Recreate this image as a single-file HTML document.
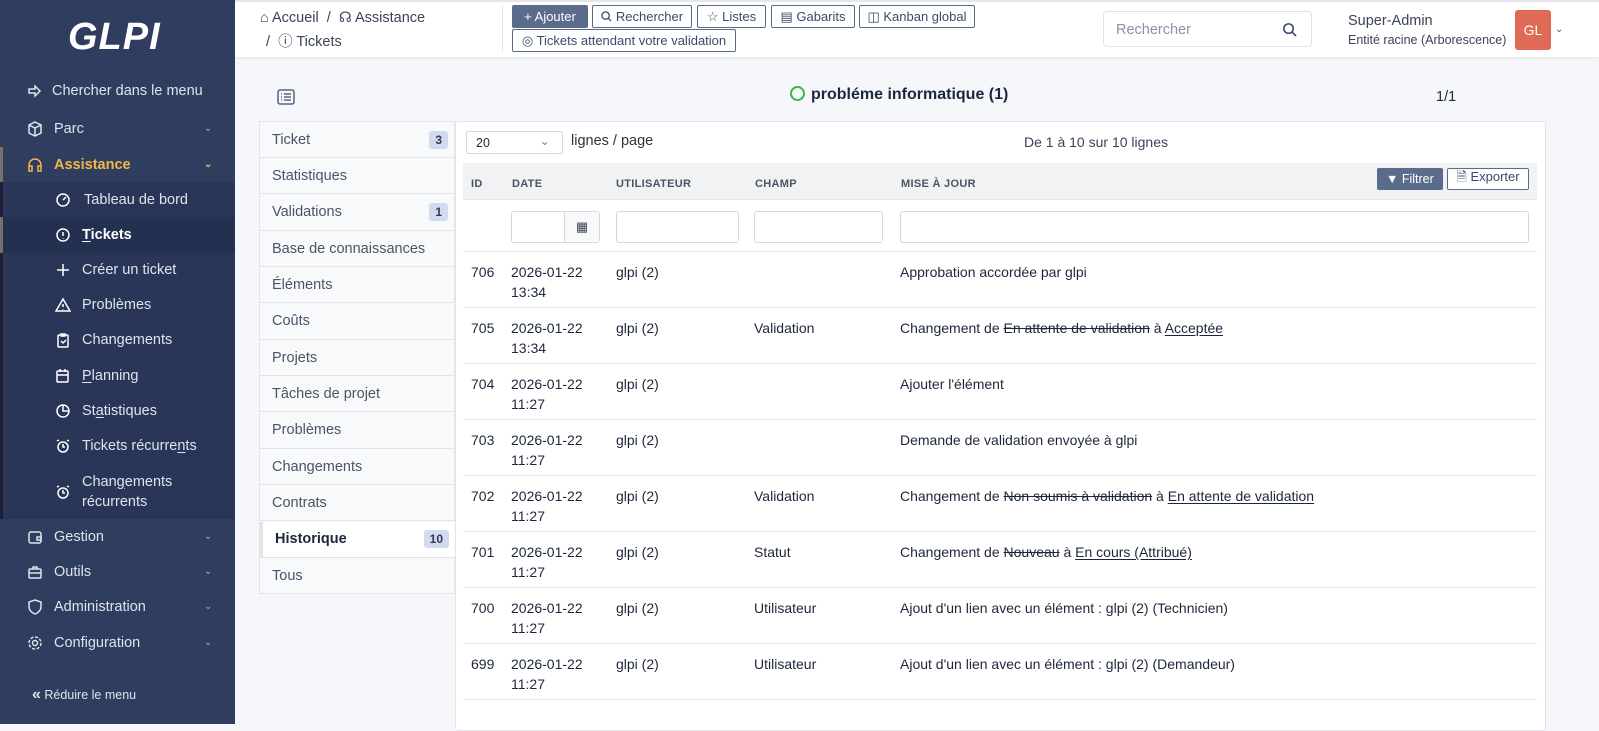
<!DOCTYPE html>
<html><head><meta charset="utf-8"><style>
*{box-sizing:border-box;margin:0;padding:0}
body{width:1599px;height:724px;overflow:hidden;background:#f5f7fb;font-family:"Liberation Sans",sans-serif;font-size:14px;color:#1d273b;position:relative}
.abs{position:absolute}
#sb{left:0;top:0;width:235px;height:724px;background:#2f3d5f;color:#dfe3ec}
.si{position:absolute;left:0;width:235px;height:35px;display:flex;align-items:center;font-size:14.5px}
.si svg{position:absolute;left:27px}
.si .t{position:absolute;left:54px}
.si .c{position:absolute;left:204px;font-size:10px;color:#aab}
.sub .t{left:82px}
.sub svg{left:55px}
#hdr{left:235px;top:0;width:1364px;height:57px;background:#fff;border-top:2px solid #e4e6ea;box-shadow:0 1px 3px rgba(0,0,0,.08)}
.btn{position:absolute;height:23px;border:1px solid #5a6b8c;border-radius:2px;font-size:13px;color:#3a4a6b;display:flex;align-items:center;justify-content:center;background:#fff;white-space:nowrap}
.btn svg{margin-right:4px}
.tab{position:absolute;left:259px;width:196px;height:36.3px;border:1px solid #e2e4e8;border-top:none;background:#f8f9fb;color:#4a5468;font-size:14.5px;padding-left:12px;display:flex;align-items:center}
.badge{position:absolute;right:6px;background:#d3daf0;color:#303a55;font-size:12px;font-weight:bold;border-radius:3px;padding:2px 6px}
.row{position:absolute;left:463px;width:1074px;height:56px;border-bottom:1px solid #e5e6e9;font-size:14px}
.row div{position:absolute;top:10px;line-height:20px}
.th{position:absolute;top:178px;font-size:11px;font-weight:bold;color:#4a5468;letter-spacing:.3px}
.inp{position:absolute;top:211px;height:32px;border:1px solid #d5d8de;border-radius:3px;background:#fff}
s{color:#1d273b}
u{text-underline-offset:2px}
</style></head><body>
<div id="sb" class="abs">
 <div class="abs" style="left:68px;top:16px;font-size:38px;font-style:italic;font-weight:bold;color:#fff;letter-spacing:1px">GLPI</div>
 <div class="si" style="top:73px"><svg width="16" height="16" viewBox="0 0 16 16" fill="none" stroke="#dfe3ec" stroke-width="1.5"><path d="M2 6h6V3l5 5-5 5v-3H2z"/></svg><span class="t" style="left:52px">Chercher dans le menu</span></div>
 <div class="si" style="top:111px"><svg width="16" height="16" viewBox="0 0 16 16" fill="none" stroke="#dfe3ec" stroke-width="1.5"><path d="M8 1l6 3v8l-6 3-6-3V4zM2 4l6 3 6-3M8 7v8"/></svg><span class="t">Parc</span><span class="c">⌄</span></div>
 <div class="abs" style="left:0;top:147px;width:3px;height:35px;background:#77716a"></div>
 <div class="si" style="top:147px;color:#f0b84c;font-weight:bold"><svg width="16" height="16" viewBox="0 0 16 16" fill="none" stroke="#f0b84c" stroke-width="1.5"><path d="M2 11V8a6 6 0 0112 0v3M2 9h3v5H2zM11 9h3v5h-3z"/></svg><span class="t">Assistance</span><span class="c" style="color:#f0b84c">⌄</span></div>
 <div class="abs" style="left:0;top:182px;width:235px;height:337px;background:#293657;border-left:3px solid #1b2035"></div>
 <div class="abs" style="left:0;top:217px;width:235px;height:36px;background:#243050;border-left:3px solid #77716a"></div>
 <div class="si sub" style="top:182px"><svg width="16" height="16" viewBox="0 0 16 16" fill="none" stroke="#fff" stroke-width="1.5"><circle cx="8" cy="8" r="6"/><path d="M8 8l3-3"/></svg><span class="t" style="left:84px">Tableau de bord</span></div>
 <div class="si sub" style="top:217px;color:#fff;font-weight:bold"><svg width="16" height="16" viewBox="0 0 16 16" fill="none" stroke="#fff" stroke-width="1.5"><circle cx="8" cy="8" r="6"/><path d="M8 5v4M8 11v.5"/></svg><span class="t"><u>T</u>ickets</span></div>
 <div class="si sub" style="top:252px"><svg width="16" height="16" viewBox="0 0 16 16" fill="none" stroke="#fff" stroke-width="1.5"><path d="M8 2v12M2 8h12"/></svg><span class="t">Créer un ticket</span></div>
 <div class="si sub" style="top:287px"><svg width="16" height="16" viewBox="0 0 16 16" fill="none" stroke="#fff" stroke-width="1.5"><path d="M8 2L1 14h14zM8 7v3M8 12v.5"/></svg><span class="t">Problèmes</span></div>
 <div class="si sub" style="top:322px"><svg width="16" height="16" viewBox="0 0 16 16" fill="none" stroke="#fff" stroke-width="1.5"><rect x="3" y="3" width="10" height="12" rx="1"/><path d="M6 2h4v2H6zM6 9l2 2 3-3"/></svg><span class="t">Changements</span></div>
 <div class="si sub" style="top:358px"><svg width="16" height="16" viewBox="0 0 16 16" fill="none" stroke="#fff" stroke-width="1.5"><rect x="2" y="3" width="11" height="11" rx="1"/><path d="M2 7h11M5 1v3M10 1v3"/></svg><span class="t"><u>P</u>lanning</span></div>
 <div class="si sub" style="top:393px"><svg width="16" height="16" viewBox="0 0 16 16" fill="none" stroke="#fff" stroke-width="1.5"><circle cx="8" cy="8" r="6"/><path d="M8 2v6h6"/></svg><span class="t">St<u>a</u>tistiques</span></div>
 <div class="si sub" style="top:428px"><svg width="16" height="16" viewBox="0 0 16 16" fill="none" stroke="#fff" stroke-width="1.5"><circle cx="8" cy="9" r="5"/><path d="M8 6v3h2M2 3l2-1M14 3l-2-1"/></svg><span class="t">Tickets récurre<u>n</u>ts</span></div>
 <div class="si sub" style="top:472px;height:40px"><svg width="16" height="16" viewBox="0 0 16 16" fill="none" stroke="#fff" stroke-width="1.5"><circle cx="8" cy="9" r="5"/><path d="M8 6v3h2M2 3l2-1M14 3l-2-1"/></svg><span class="t" style="line-height:20px;top:0">Chan<u>g</u>ements<br>récurrents</span></div>
 <div class="si" style="top:519px"><svg width="16" height="16" viewBox="0 0 16 16" fill="none" stroke="#dfe3ec" stroke-width="1.5"><rect x="2" y="3" width="12" height="11" rx="2"/><path d="M10 8h4v3h-4z"/></svg><span class="t">Gestion</span><span class="c">⌄</span></div>
 <div class="si" style="top:554px"><svg width="16" height="16" viewBox="0 0 16 16" fill="none" stroke="#dfe3ec" stroke-width="1.5"><rect x="2" y="5" width="12" height="9" rx="1"/><path d="M6 5V3h4v2M2 9h12"/></svg><span class="t">Outils</span><span class="c">⌄</span></div>
 <div class="si" style="top:589px"><svg width="16" height="16" viewBox="0 0 16 16" fill="none" stroke="#dfe3ec" stroke-width="1.5"><path d="M8 1l6 2v5c0 3-3 6-6 7-3-1-6-4-6-7V3z"/></svg><span class="t">Administration</span><span class="c">⌄</span></div>
 <div class="si" style="top:625px"><svg width="16" height="16" viewBox="0 0 16 16" fill="none" stroke="#dfe3ec" stroke-width="1.5"><circle cx="8" cy="8" r="2.5"/><circle cx="8" cy="8" r="6" stroke-dasharray="3 1.7"/></svg><span class="t">Configuration</span><span class="c">⌄</span></div>
 <div class="abs" style="left:32px;top:686px;font-size:12.5px;color:#dfe3ec"><b style="font-size:16px">«</b> Réduire le menu</div>
</div>
<div id="hdr" class="abs">
 <div class="abs" style="left:25px;top:8px;font-size:14.5px;color:#3a4358">⌂ Accueil &nbsp;/ &nbsp;☊ Assistance</div>
 <div class="abs" style="left:31px;top:28px;font-size:14.5px;color:#3a4358">/ &nbsp;ⓘ Tickets</div>
 <div class="abs" style="left:267px;top:4px;width:1px;height:46px;background:#e2e4e8"></div>
 <div class="btn" style="left:277px;top:3px;width:76px;background:#5a6b8c;color:#fff">+ Ajouter</div>
 <div class="btn" style="left:357px;top:3px;width:100px"><svg width="11" height="11" viewBox="0 0 12 12" fill="none" stroke="#3a4a6b" stroke-width="1.4"><circle cx="5" cy="5" r="4"/><path d="M8 8l3 3"/></svg>Rechercher</div>
 <div class="btn" style="left:462px;top:3px;width:69px">☆ Listes</div>
 <div class="btn" style="left:536px;top:3px;width:84px">▤ Gabarits</div>
 <div class="btn" style="left:624px;top:3px;width:116px">◫ Kanban global</div>
 <div class="btn" style="left:277px;top:27px;width:224px">◎ Tickets attendant votre validation</div>
 <div class="abs" style="left:868px;top:9px;width:209px;height:36px;border:1px solid #dfe2e6;border-radius:4px;padding:10px 12px;color:#8a93a3;font-size:14.5px">Rechercher<svg style="position:absolute;right:14px;top:10px" width="15" height="15" viewBox="0 0 16 16" fill="none" stroke="#3a4a6b" stroke-width="1.7"><circle cx="7" cy="7" r="5"/><path d="M11 11l4 4"/></svg></div>
 <div class="abs" style="left:1113px;top:11px;font-size:14.5px;color:#3a4358">Super-Admin</div>
 <div class="abs" style="left:1113px;top:31px;font-size:12.5px;color:#3a4358">Entité racine (Arborescence)</div>
 <div class="abs" style="left:1280px;top:8px;width:36px;height:40px;background:#df6a55;border-radius:3px;color:#fff;font-size:14px;text-align:center;line-height:40px">GL</div>
 <div class="abs" style="left:1320px;top:22px;font-size:10px;color:#555">⌄</div>
</div>
<svg class="abs" style="left:277px;top:89px" width="18" height="16" viewBox="0 0 18 16" fill="none" stroke="#3a4a6b" stroke-width="1.3"><rect x="1" y="1" width="16" height="14" rx="2"/><path d="M4 5h1M7 5h7M4 8h1M7 8h7M4 11h1M7 11h7"/></svg>
<div class="abs" style="left:790px;top:86px;font-size:16px;font-weight:bold;color:#1d273b"><span style="display:inline-block;width:15px;height:15px;border:2px solid #3cb44b;border-radius:50%;vertical-align:-2px;margin-right:6px"></span>probléme informatique (1)</div>
<div class="abs" style="left:1436px;top:89px;font-size:14.5px">1/1</div>

<div class="abs" style="left:259px;top:121px;width:197px;height:1px;background:#e2e4e8"></div>
<div class="tab" style="top:122px">Ticket<span class="badge">3</span></div>
<div class="tab" style="top:158px">Statistiques</div>
<div class="tab" style="top:194.5px">Validations<span class="badge">1</span></div>
<div class="tab" style="top:231px">Base de connaissances</div>
<div class="tab" style="top:267px">Éléments</div>
<div class="tab" style="top:303.5px">Coûts</div>
<div class="tab" style="top:340px">Projets</div>
<div class="tab" style="top:376px">Tâches de projet</div>
<div class="tab" style="top:412.5px">Problèmes</div>
<div class="tab" style="top:449px">Changements</div>
<div class="tab" style="top:485px">Contrats</div>
<div class="tab" style="top:521.5px;background:#fff;border-left:4px solid #e2e4e8;font-weight:bold;color:#1d273b;border-right:none;padding-left:12px">Historique<span class="badge">10</span></div>
<div class="tab" style="top:558px">Tous</div>

<div class="abs" style="left:455px;top:121px;width:1091px;height:610px;background:#fff;border:1px solid #e2e4e8;border-radius:3px"></div>
<div class="abs" style="left:466px;top:131px;width:97px;height:23px;border:1px solid #d5d8de;border-radius:2px;font-size:12.5px;padding:4px 9px">20<span style="position:absolute;right:12px;top:1px;color:#888">⌄</span></div>
<div class="abs" style="left:571px;top:133px;font-size:14.5px;color:#333">lignes / page</div>
<div class="abs" style="left:1024px;top:134px;font-size:14px;color:#3a4358">De 1 à 10 sur 10 lignes</div>
<div class="abs" style="left:463px;top:163px;width:1074px;height:37px;background:#f1f2f4;border-bottom:1px solid #e2e4e8"></div>
<div class="th" style="left:471px">ID</div><div class="th" style="left:512px">DATE</div><div class="th" style="left:616px">UTILISATEUR</div><div class="th" style="left:755px">CHAMP</div><div class="th" style="left:901px">MISE À JOUR</div>
<div class="abs" style="left:1377px;top:168px;width:66px;height:22px;background:#5a6b8c;color:#fff;font-size:12.5px;border-radius:2px;padding:4px 0 0 9px">▼ Filtrer</div>
<div class="btn" style="left:1447px;top:168px;height:22px;width:82px;color:#3a4a6b">🗎 Exporter</div>
<div class="inp" style="left:511px;width:89px"><div style="position:absolute;left:52px;top:0;width:35px;height:30px;border-left:1px solid #d5d8de;background:#f8f9fa;text-align:center;line-height:30px;font-size:13px;color:#3a4358">▦</div></div>
<div class="inp" style="left:616px;width:123px"></div>
<div class="inp" style="left:754px;width:129px"></div>
<div class="inp" style="left:900px;width:629px"></div>
<div class="abs" style="left:463px;top:251px;width:1074px;height:1px;background:#e5e6e9"></div>

<div class="row" style="top:252px"><div style="left:8px">706</div><div style="left:48px">2026-01-22<br>13:34</div><div style="left:153px">glpi (2)</div><div style="left:437px">Approbation accordée par glpi</div></div>
<div class="row" style="top:308px"><div style="left:8px">705</div><div style="left:48px">2026-01-22<br>13:34</div><div style="left:153px">glpi (2)</div><div style="left:291px">Validation</div><div style="left:437px">Changement de <s>En attente de validation</s> à <u>Acceptée</u></div></div>
<div class="row" style="top:364px"><div style="left:8px">704</div><div style="left:48px">2026-01-22<br>11:27</div><div style="left:153px">glpi (2)</div><div style="left:437px">Ajouter l'élément</div></div>
<div class="row" style="top:420px"><div style="left:8px">703</div><div style="left:48px">2026-01-22<br>11:27</div><div style="left:153px">glpi (2)</div><div style="left:437px">Demande de validation envoyée à glpi</div></div>
<div class="row" style="top:476px"><div style="left:8px">702</div><div style="left:48px">2026-01-22<br>11:27</div><div style="left:153px">glpi (2)</div><div style="left:291px">Validation</div><div style="left:437px">Changement de <s>Non soumis à validation</s> à <u>En attente de validation</u></div></div>
<div class="row" style="top:532px"><div style="left:8px">701</div><div style="left:48px">2026-01-22<br>11:27</div><div style="left:153px">glpi (2)</div><div style="left:291px">Statut</div><div style="left:437px">Changement de <s>Nouveau</s> à <u>En cours (Attribué)</u></div></div>
<div class="row" style="top:588px"><div style="left:8px">700</div><div style="left:48px">2026-01-22<br>11:27</div><div style="left:153px">glpi (2)</div><div style="left:291px">Utilisateur</div><div style="left:437px">Ajout d'un lien avec un élément : glpi (2) (Technicien)</div></div>
<div class="row" style="top:644px"><div style="left:8px">699</div><div style="left:48px">2026-01-22<br>11:27</div><div style="left:153px">glpi (2)</div><div style="left:291px">Utilisateur</div><div style="left:437px">Ajout d'un lien avec un élément : glpi (2) (Demandeur)</div></div>
</body></html>
